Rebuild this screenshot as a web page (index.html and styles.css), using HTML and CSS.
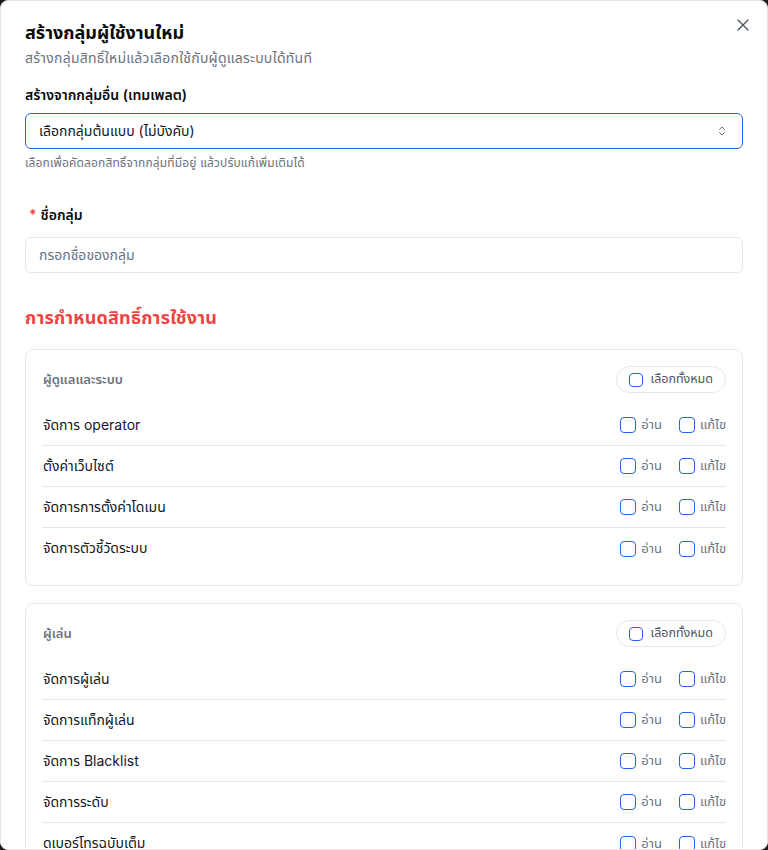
FILE: index.html
```html
<!DOCTYPE html>
<html lang="th">
<head>
<meta charset="utf-8">
<title>สร้างกลุ่มผู้ใช้งานใหม่</title>
<link rel="stylesheet" href="styles.css">
</head>
<body>
<div class="modal">
  <button class="close" aria-label="ปิด">
    <svg viewBox="0 0 24 24" width="20" height="20" fill="none" stroke="currentColor" stroke-width="1.6" stroke-linecap="round"><path d="M18 6 6 18M6 6l12 12"/></svg>
  </button>
  <h1 class="title">สร้างกลุ่มผู้ใช้งานใหม่</h1>
  <p class="subtitle">สร้างกลุ่มสิทธิ์ใหม่แล้วเลือกใช้กับผู้ดูแลระบบได้ทันที</p>

  <label class="label label-template">สร้างจากกลุ่มอื่น (เทมเพลต)</label>
  <div class="select">
    <span>เลือกกลุ่มต้นแบบ (ไม่บังคับ)</span>
    <svg viewBox="0 0 24 24" width="12" height="12" fill="none" stroke="currentColor" stroke-width="2" stroke-linecap="round" stroke-linejoin="round"><path d="m7 15 5 5 5-5"/><path d="m7 9 5-5 5 5"/></svg>
  </div>
  <p class="helper">เลือกเพื่อคัดลอกสิทธิ์จากกลุ่มที่มีอยู่ แล้วปรับแก้เพิ่มเติมได้</p>

  <label class="label label-name"><span class="req">*</span>ชื่อกลุ่ม</label>
  <div class="input">กรอกชื่อของกลุ่ม</div>

  <h2 class="section">การกำหนดสิทธิ์การใช้งาน</h2>

  <div class="card">
    <div class="card-head">
      <span class="card-title">ผู้ดูแลและระบบ</span>
      <span class="pill"><span class="cb"></span>เลือกทั้งหมด</span>
    </div>
    <div class="row"><span class="row-name">จัดการ operator</span><span class="perms"><span class="perm"><span class="cb"></span>อ่าน</span><span class="perm"><span class="cb"></span>แก้ไข</span></span></div>
    <div class="row"><span class="row-name">ตั้งค่าเว็บไซต์</span><span class="perms"><span class="perm"><span class="cb"></span>อ่าน</span><span class="perm"><span class="cb"></span>แก้ไข</span></span></div>
    <div class="row"><span class="row-name">จัดการการตั้งค่าโดเมน</span><span class="perms"><span class="perm"><span class="cb"></span>อ่าน</span><span class="perm"><span class="cb"></span>แก้ไข</span></span></div>
    <div class="row"><span class="row-name">จัดการตัวชี้วัดระบบ</span><span class="perms"><span class="perm"><span class="cb"></span>อ่าน</span><span class="perm"><span class="cb"></span>แก้ไข</span></span></div>
  </div>

  <div class="card">
    <div class="card-head">
      <span class="card-title">ผู้เล่น</span>
      <span class="pill"><span class="cb"></span>เลือกทั้งหมด</span>
    </div>
    <div class="row"><span class="row-name">จัดการผู้เล่น</span><span class="perms"><span class="perm"><span class="cb"></span>อ่าน</span><span class="perm"><span class="cb"></span>แก้ไข</span></span></div>
    <div class="row"><span class="row-name">จัดการแท็กผู้เล่น</span><span class="perms"><span class="perm"><span class="cb"></span>อ่าน</span><span class="perm"><span class="cb"></span>แก้ไข</span></span></div>
    <div class="row"><span class="row-name">จัดการ Blacklist</span><span class="perms"><span class="perm"><span class="cb"></span>อ่าน</span><span class="perm"><span class="cb"></span>แก้ไข</span></span></div>
    <div class="row"><span class="row-name">จัดการระดับ</span><span class="perms"><span class="perm"><span class="cb"></span>อ่าน</span><span class="perm"><span class="cb"></span>แก้ไข</span></span></div>
    <div class="row"><span class="row-name">ดูเบอร์โทรฉบับเต็ม</span><span class="perms"><span class="perm"><span class="cb"></span>อ่าน</span><span class="perm"><span class="cb"></span>แก้ไข</span></span></div>
  </div>
</div>
</body>
</html>
```

FILE: styles.css
```css
* { box-sizing: border-box; }
html, body {
  margin: 0;
  height: 850px;
  overflow: hidden;
  background: #1c1c1c;
}
body {
  font-family: Inter, "Noto Sans Thai", "Noto Sans", sans-serif;
  color: #111827;
}
.modal {
  position: relative;
  width: 768px;
  height: 850px;
  overflow: hidden;
  background: #fff;
  border: 1px solid #e5e7eb;
  border-radius: 8px;
  padding: 18px 24px 0;
  display: flex;
  flex-direction: column;
}
.modal > * { flex-shrink: 0; }
.close {
  position: absolute;
  top: 14px;
  right: 14px;
  width: 20px;
  height: 20px;
  padding: 0;
  border: 0;
  background: none;
  color: #4b5563;
  display: flex;
}
.title {
  margin: 0;
  font-size: 18px;
  line-height: 28px;
  font-weight: 700;
  color: #0a0a0a;
}
.subtitle {
  margin: 1px 0 0;
  font-size: 14px;
  line-height: 20px;
  letter-spacing: 0.25px;
  color: #6b7280;
}
.label {
  display: block;
  font-size: 14px;
  line-height: 20px;
  font-weight: 600;
  color: #0a0a0a;
}
.label-template { margin-top: 17px; }
.label-name { margin-top: 34px; padding-left: 4px; }
.req { color: #ef4444; margin-right: 4px; }
.select {
  margin-top: 8px;
  height: 36px;
  border: 1px solid #2563eb;
  border-radius: 6px;
  padding: 0 14px 0 13px;
  display: flex;
  align-items: center;
  justify-content: space-between;
  font-size: 14px;
  color: #111827;
}
.select svg { color: #6b7280; }
.helper {
  margin: 6px 0 0;
  font-size: 12px;
  line-height: 16px;
  letter-spacing: 0.15px;
  color: #6b7280;
}
.input {
  margin-top: 12px;
  height: 36px;
  border: 1px solid #e5e7eb;
  border-radius: 6px;
  padding: 0 13px;
  display: flex;
  align-items: center;
  font-size: 14px;
  color: #6b7280;
}
.section {
  margin: 31px 0 0;
  font-size: 18px;
  line-height: 28px;
  font-weight: 700;
  letter-spacing: 0.2px;
  color: #ef4444;
}
.card {
  margin-top: 17px;
  border: 1px solid #e5e7eb;
  border-radius: 8px;
  padding: 16px 16px 16px;
}
.card-head {
  display: flex;
  align-items: center;
  justify-content: space-between;
  margin-bottom: 12px;
}
.card-title {
  font-size: 13px;
  font-weight: 600;
  color: #6b7280;
  padding-left: 1px;
}
.pill {
  height: 27px;
  border: 1px solid #e5e7eb;
  border-radius: 999px;
  padding: 0 12px;
  display: flex;
  align-items: center;
  gap: 8px;
  font-size: 12.5px;
  color: #4b5563;
}
.cb {
  width: 16px;
  height: 16px;
  border: 1.5px solid #2563eb;
  border-radius: 4px;
  background: #fff;
  flex-shrink: 0;
}
.pill .cb { width: 14px; height: 14px; }
.row {
  height: 41px;
  display: flex;
  align-items: center;
  justify-content: space-between;
  border-bottom: 1px solid #e5e7eb;
  padding-left: 1px;
}
.row:last-child { border-bottom: 0; }
.row-name { font-size: 14px; color: #111827; }
.perms { display: flex; gap: 16px; }
.perm {
  display: flex;
  align-items: center;
  gap: 5px;
  font-size: 13px;
  color: #6b7280;
}
.perm:first-child { margin-right: 1px; }
```
